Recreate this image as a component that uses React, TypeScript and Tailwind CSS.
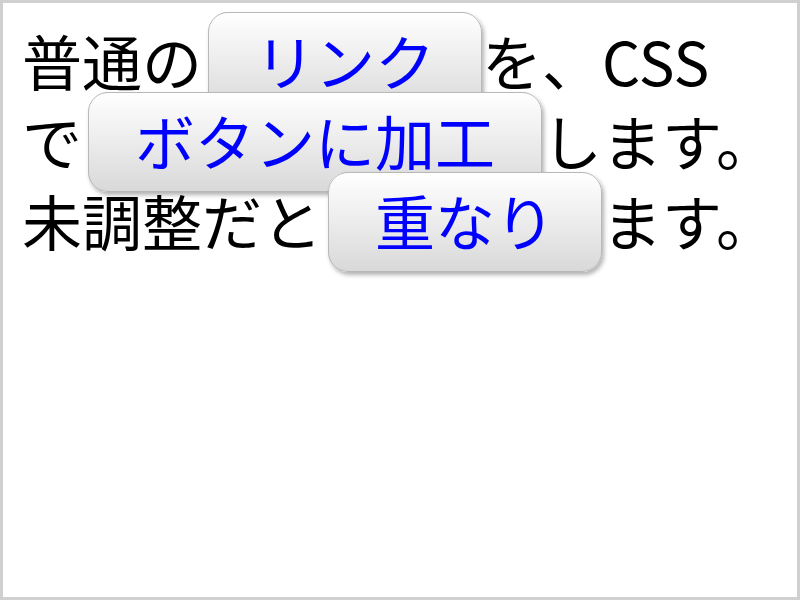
import React from "react";

// Inline link styled as a rounded, gradient "button". Vertical padding is left
// as-is so that neighbouring lines overlap, the way untuned CSS does.
const LinkButton = ({ children }: { children: React.ReactNode }) => (
  <a
    href="#"
    className="ml-[6px] rounded-[20px] border border-[#b8b8b8] bg-gradient-to-b from-white to-[#d9d9d9] px-[46px] pt-[3px] pb-[8px] text-[#0000ff] no-underline shadow-[2px_3px_4px_rgba(0,0,0,0.3)]"
  >
    {children}
  </a>
);

export default function App() {
  return (
    <div className="h-screen w-full border-[3px] border-[#d0d0d0] bg-white pl-[19px] pt-[17px]">
      <p
        className="whitespace-nowrap text-[60px] leading-[80px] text-black"
        style={{ fontFamily: '"Noto Sans CJK JP", "Noto Sans", sans-serif' }}
      >
        普通の<LinkButton>リンク</LinkButton>を、CSS
        <br />
        で<LinkButton>ボタンに加工</LinkButton>します。
        <br />
        未調整だと<LinkButton>重なり</LinkButton>ます。
      </p>
    </div>
  );
}
